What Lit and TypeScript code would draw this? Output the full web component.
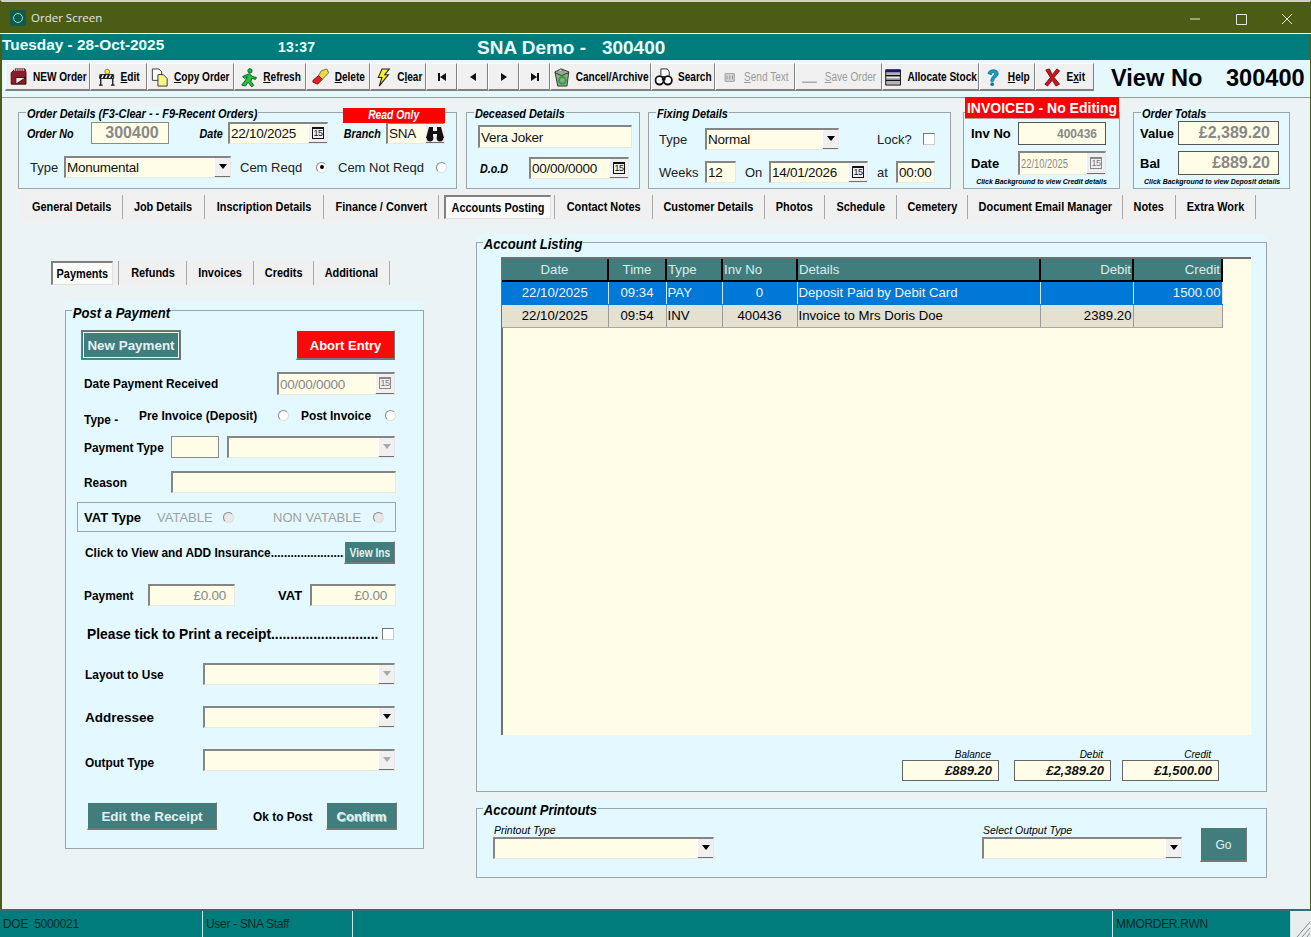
import { LitElement, html, css, svg } from 'lit';
import { customElement } from 'lit/decorators.js';

const ICONS: Record<string, unknown> = {
  note: svg`<path d="M2 5 L6 1 H17 L18 5 V17 H2 Z" fill="#8a1c2c" stroke="#3a0a10"/><path d="M3 2 H17" stroke="#f0f0f0" stroke-dasharray="1 1" stroke-width="2"/><path d="M7 17 V10 H18 Z" fill="#f4e9ea" stroke="#3a0a10"/>`,
  edit: svg`<circle cx="11" cy="4" r="2.6" fill="#f3ea3c" stroke="#777"/><path d="M3 7 H18 V11 H3 Z" fill="#fff" stroke="#111"/><path d="M5 7 L3 11 M9 7 L7 11 M13 7 L11 11 M17 7 L15 11" stroke="#111" stroke-width="2"/><path d="M4 11 V18 M17 11 V18 M2 18 H6 M15 18 H19" stroke="#111" stroke-width="1.4" fill="none"/>`,
  copy: svg`<path d="M2 1 H9 L12 4 V13 H2 Z" fill="#fff" stroke="#333"/><path d="M8 7 H14 L18 11 V19 H8 Z" fill="#fbf38a" stroke="#333"/>`,
  run: svg`<circle cx="11" cy="3" r="2.3" fill="#18b83c" stroke="#063"/><path d="M10 6 L14 9 L18 10 L17 12 L13 11 L12 14 L15 18 L13 20 L9 15 L6 19 L2 18 L6 13 L8 9 L5 11 L3 9 Z" fill="#22c440" stroke="#05451a" stroke-width=".9"/>`,
  eraser: svg`<path d="M11 3 L17 1 L19 5 L12 12 L8 8 Z" fill="#f4dc38" stroke="#666"/><path d="M8 8 L12 12 L7 17 L2 15 V13 Z" fill="#e0242c" stroke="#7a1015"/>`,
  bolt: svg`<path d="M9 1 H17 L12 7 H16 L6 19 L9 10 H5 Z" fill="#f6ee2e" stroke="#222" stroke-width="1.1"/>`,
  first: svg`<path d="M1 1 H3 V9 H1 Z M9 1 V9 L3 5 Z" fill="#111"/>`,
  prev: svg`<path d="M8 1 V9 L2 5 Z" fill="#111"/>`,
  next: svg`<path d="M2 1 V9 L8 5 Z" fill="#111"/>`,
  last: svg`<path d="M1 1 V9 L7 5 Z M7 1 H9 V9 H7 Z" fill="#111"/>`,
  bin: svg`<path d="M3 4 L10 1 L18 4 L16 19 H6 Z" fill="#96a890" stroke="#333"/><path d="M3 5 L10 8 L18 5" fill="none" stroke="#333"/><circle cx="11" cy="13" r="3.6" fill="none" stroke="#27a83a" stroke-width="2.2"/><path d="M6 3 L9 1 L12 3" fill="#ccc" stroke="#555"/>`,
  binoc: svg`<path d="M7 1 H14 L16 4 V9 H7 Z" fill="#fff" stroke="#222"/><circle cx="5.5" cy="13" r="4.4" fill="#fff" stroke="#111" stroke-width="2"/><circle cx="14.5" cy="13" r="4.4" fill="#fff" stroke="#111" stroke-width="2"/><path d="M8 10 H12 V13 H8 Z" fill="#111"/>`,
  text: svg`<path d="M5 6 H15 V14 H5 Z" fill="#d8d8d8" stroke="#999"/><path d="M7 8 V12 M10 8 V12 M13 8 V12" stroke="#888"/>`,
  save: svg`<path d="M1 15 H17" stroke="#aaa" stroke-width="1.4"/>`,
  stock: svg`<path d="M2 2 H18 V18 H2 Z" fill="#b4b4b4" stroke="#111"/><path d="M2 3 H18" stroke="#15157a" stroke-width="3"/><path d="M2 8 H18 M2 13 H18" stroke="#111" stroke-width="1.5"/><path d="M3 10 H17" stroke="#eee"/>`,
  help: svg`<path d="M4 6 C4 1 15 0 15 6 C15 10 10 10 10 14 H7 C7 9 11 8 11 6 C11 4 8 4 8 7 Z" fill="#12a0c4" stroke="#0a5a80" stroke-width=".7"/><circle cx="8.5" cy="17" r="2" fill="#0e7ea6"/>`,
  exit: svg`<path d="M3 2 L7 1 L10 7 L15 1 L18 3 L12 10 L18 17 L14 19 L10 13 L5 19 L2 17 L8 10 Z" fill="#d0141c" stroke="#4a0508" stroke-width=".8"/>`,
};

type Tool = { icon: string; label: unknown; off?: boolean };

const TOOLS: Tool[] = [
  { icon: 'note', label: 'NEW Order' },
  { icon: 'edit', label: html`<u>E</u>dit` },
  { icon: 'copy', label: html`<u>C</u>opy Order` },
  { icon: 'run', label: html`<u>R</u>efresh` },
  { icon: 'eraser', label: html`<u>D</u>elete` },
  { icon: 'bolt', label: html`C<u>l</u>ear` },
  { icon: 'first', label: '' },
  { icon: 'prev', label: '' },
  { icon: 'next', label: '' },
  { icon: 'last', label: '' },
  { icon: 'bin', label: 'Cancel/Archive' },
  { icon: 'binoc', label: 'Search' },
  { icon: 'text', label: html`<u>S</u>end Text`, off: true },
  { icon: 'save', label: html`<u>S</u>ave Order`, off: true },
  { icon: 'stock', label: 'Allocate Stock' },
  { icon: 'help', label: html`<u>H</u>elp` },
  { icon: 'exit', label: html`E<u>x</u>it` },
];

const TABS = ['General Details', 'Job Details', 'Inscription Details', 'Finance / Convert', 'Accounts Posting', 'Contact Notes', 'Customer Details', 'Photos', 'Schedule', 'Cemetery', 'Document Email Manager', 'Notes', 'Extra Work'];
const SUBTABS = ['Payments', 'Refunds', 'Invoices', 'Credits', 'Additional'];
const COLS = [
  ['Date', 'c'], ['Time', 'c'], ['Type', 'l'], ['Inv No', 'l'], ['Details', 'l'], ['Debit', 'r'], ['Credit', 'r'],
];
const ROWS = [
  { sel: true, cells: ['22/10/2025', '09:34', 'PAY', '0', 'Deposit Paid by Debit Card', '', '1500.00'] },
  { sel: false, cells: ['22/10/2025', '09:54', 'INV', '400436', 'Invoice to Mrs Doris Doe', '2389.20', ''] },
];
const ALIGN = ['c', 'c', 'l', 'c', 'l', 'r', 'r'];

@customElement('app-root')
export class AppRoot extends LitElement {
  static styles = css`
    :host { display: block; width: 1311px; height: 937px; overflow: hidden; font-family: "Liberation Sans", Arial, sans-serif; color: #000; }
    * { box-sizing: border-box; }
    .window { width: 1311px; height: 937px; display: flex; flex-direction: column; background: #ecf3f5; border-top: 2px solid #cfcfcf; border-left: 2px solid #4b5d14; border-right: 1px solid #4b5d14; }

    .title { height: 32px; margin-left: -2px; margin-right: -1px; background: #4b5d14; color: #e6e6e6; display: flex; align-items: center; padding-left: 10px; font: 11.5px "Open Sans", "Liberation Sans", sans-serif; border-bottom: 1px solid #fff; flex: none; }
    .logo { width: 16px; height: 16px; background: #0f5a4c; border-radius: 2px; display: flex; align-items: center; justify-content: center; margin-right: 5px; }
    .logo i { width: 10px; height: 10px; border: 1.5px solid #8fe0e0; border-radius: 50%; }
    .winbtns { margin-left: auto; display: grid; grid-template-columns: 46px 46px 46px; width: 138px; margin-right: 1px; }
    .winbtns svg { width: 46px; height: 30px; display: block; }

    .date-bar { height: 26px; background: #007c7c; color: #e8ffff; font-weight: bold; display: grid; grid-template-columns: 276px 199px 1fr; align-items: center; flex: none; }
    .date-bar .d { font-size: 15.4px; padding-bottom: 4px; }
    .date-bar .t { font-size: 14px; letter-spacing: .3px; }
    .date-bar .s { font-size: 19px; white-space: pre; padding-top: 2px; }

    .toolbar { height: 38px; background: #e5f8fc; border-bottom: 1px solid #9a9a9a; padding: 3px 0 0 3px; display: grid; grid-template-columns: 85px 57px 87px 72px 64px 56px 31px 31px 31px 31px 101px 64px 80px 87px 97px 56px 59px 17px 115px 1fr; flex: none; }
    .tool { height: 28px; background: #f0f0f0; border-top: 1px solid #fff; border-left: 1px solid #fff; border-right: 1px solid #808080; border-bottom: 2px solid #808080; display: flex; align-items: center; justify-content: center; font: bold 12px "Liberation Sans", sans-serif; white-space: nowrap; }
    .tool-in { display: flex; align-items: center; gap: 6px; transform: scaleX(.84); flex: none; padding-top: 1px; }
    .tool-in svg { width: 22px; height: 19px; flex: none; }
    .tool.nav .tool-in { transform: none; }
    .tool.nav .tool-in svg { width: 10px; height: 10px; }
    .tool.off { color: #9c9c9c; font-weight: normal; }
    .view { font-size: 23.6px; font-weight: bold; line-height: 30px; white-space: nowrap; height: 30px; }
    .view-a { grid-column: 19; }

    .top { height: 92px; padding: 14px 0 0 16px; display: grid; grid-template-columns: 439px 183px 311px 169px 170px; flex: none; }
    .group { position: relative; border: 1px solid #9aa5a8; background: #e3f9ff; }
    .legend { position: absolute; top: -6px; left: 7px; padding: 0 1px; background: #e3f9ff; font: italic bold 12px/14px "Liberation Sans", sans-serif; white-space: nowrap; transform: scaleX(.91); transform-origin: left; }
    .legend.big { font-size: 15px; line-height: 16px; top: -7px; left: 6px; transform: scaleX(.87); }
    .g-order { height: 77px; }
    .g-dec { height: 77px; margin-left: 9px; }
    .g-fix { height: 77px; margin-left: 8px; }
    .g-inv { height: 77px; margin-left: 12px; }
    .g-tot { height: 77px; margin-left: 13px; }

    .row { display: grid; align-items: center; white-space: nowrap; }
    .lbl { font-size: 13px; color: #222; }
    .il { font: italic bold 12.5px "Liberation Sans", sans-serif; transform: scaleX(.86); transform-origin: left; padding-top: 2px; }
    .il.right6 { transform-origin: right; }
    .bl { font-weight: bold; font-size: 13px; }
    .sl { font-weight: bold; font-size: 11.9px; padding-top: 1px; }
    .pad9 { padding-left: 9px; }
    .right6 { text-align: right; padding-right: 6px; }

    .inp { height: 100%; background: #fffde8; border-top: 2px solid #858585; border-left: 2px solid #858585; border-right: 1px solid #e8e8e8; border-bottom: 1px solid #e8e8e8; font-size: 13.5px; letter-spacing: -.25px; display: flex; align-items: center; padding-left: 1px; overflow: hidden; white-space: nowrap; color: #111; }
    .inp.flat { border: 1px solid #8a8a8a; }
    .inp.grey { color: #888; }
    .inp.end { justify-content: flex-end; padding-right: 8px; }
    .inp.mid { justify-content: center; padding-left: 4px; }
    .inp.big { font-size: 16px; font-weight: bold; letter-spacing: 0; }
    .inp.small { font-size: 12px; font-weight: bold; letter-spacing: 0; }
    .inp.dark { border-color: #555; border-width: 1px; }
    .sq { margin-left: auto; margin-right: -1px; height: calc(100% + 1px); width: 20px; flex: none; background: #f0f0f0; border-left: 1px solid #fff; border-bottom: 2px solid #707070; border-right: 1px solid #707070; display: flex; align-items: center; justify-content: center; }
    .combo .sq { width: 17px; }
    .cal { width: 12px; height: 12px; border: 1px solid #111; border-top-width: 2px; font: 9px/9px "Liberation Sans", sans-serif; letter-spacing: -.5px; text-align: center; color: #111; overflow: hidden; }
    .off .cal { border-color: #888; color: #777; }
    .arrow { width: 0; height: 0; border: 4px solid transparent; border-top: 5px solid #000; border-bottom: 0; }
    .off .arrow { border-top-color: #aaa; }
    .narrow-date span { font-size: 12px; letter-spacing: 0; display: inline-block; width: 60px; flex: none; transform: scaleX(.78); transform-origin: left; }
    .bino { width: 20px; height: 18px; flex: none; }

    .radio { width: 11px; height: 11px; border-radius: 50%; background: #fff; border: 1px solid #8a8a8a; border-right-color: #ddd; border-bottom-color: #ddd; display: flex; align-items: center; justify-content: center; }
    .radio i { width: 4px; height: 4px; background: #000; border-radius: 50%; }
    .radio.off { background: #e8e8e8; }
    .check { width: 12px; height: 12px; background: #fff; border: 1px solid #777; border-right-color: #ccc; border-bottom-color: #ccc; }

    .o1 { grid-template-columns: 64px 78px 59px 100px 58px 59px; margin: 9px 0 0 8px; height: 22px; }
    .o2 { grid-template-columns: 34px 167px 85px 22px 98px 12px; margin: 12px 0 0 11px; height: 22px; }
    .read-only { position: absolute; top: -5px; left: 324px; width: 102px; height: 15px; background: #f00; color: #fff; font: italic bold 12px/15px "Liberation Sans", sans-serif; text-align: center; }
    .read-only span { display: inline-block; transform: scaleX(.86); }
    .d1 { grid-template-columns: 154px; margin: 12px 0 0 11px; height: 23px; }
    .d2 { grid-template-columns: 49px 100px; margin: 9px 0 0 13px; height: 22px; }
    .f1 { grid-template-columns: 46px 134px 84px 12px; margin: 15px 0 0 10px; height: 22px; }
    .f1 .lock { padding-left: 38px; }
    .f2 { grid-template-columns: 46px 31px 33px 99px 28px 39px; margin: 11px 0 0 10px; height: 22px; }
    .invoiced { position: absolute; top: -16px; left: 1px; width: 154px; height: 22px; background: #f00; color: #fff; font: bold 14px/22px "Liberation Sans", sans-serif; text-align: center; white-space: nowrap; border-bottom: 1px solid #b8a0a0; }
    .i1 { grid-template-columns: 47px 88px; margin: 9px 0 0 7px; height: 23px; }
    .i2 { grid-template-columns: 47px 88px; margin: 6px 0 0 7px; height: 24px; }
    .t1 { grid-template-columns: 38px 101px; margin: 8px 0 0 6px; height: 24px; }
    .t2 { grid-template-columns: 38px 101px; margin: 6px 0 0 6px; height: 24px; }
    .hint { font: italic bold 8px/10px "Liberation Sans", sans-serif; text-align: center; margin-top: 2px; white-space: nowrap; transform: scaleX(.87); }

    .tabs { height: 32px; margin-left: 20px; padding-top: 5px; display: grid; grid-template-columns: 101px 82px 119px 115px 116px 98px 112px 60px 72px 71px 155px 53px 80px; width: 1234px; background: #f0f0f0; flex: none; }
    .tab { height: 24px; border-right: 1px solid #a8a8a8; display: flex; align-items: center; justify-content: center; font: bold 12px "Liberation Sans", sans-serif; white-space: nowrap; }
    .tab span, .subtab span { display: block; flex: none; transform: scaleX(.91); }
    .tab.on { background: #fbfbfb; margin: 0 3px 0 5px; border-top: 2px solid #808080; border-left: 2px solid #808080; border-right: 1px solid #e0e0e0; border-bottom: 1px solid #e0e0e0; padding-top: 1px; }
    .tab-wrap { border-right: 1px solid #a8a8a8; height: 24px; }

    .main { flex: 1; display: grid; grid-template-columns: 474px 791px; min-height: 0; }
    .left { padding-top: 39px; }
    .subtabs { margin-left: 49px; display: grid; grid-template-columns: 68px 68px 67px 60px 76px; width: 339px; height: 24px; background: #f0f0f0; }
    .subtab { border-right: 1px solid #a8a8a8; display: flex; align-items: center; justify-content: center; font: bold 12px "Liberation Sans", sans-serif; }
    .subtab.on { height: 100%; background: #fbfbfb; margin-right: 5px; border: 1px solid #808080; border-top-width: 2px; border-left-width: 2px; border-right-color: #e0e0e0; border-bottom-color: #e0e0e0; }
    .subtab-wrap { border-right: 1px solid #a8a8a8; }

    .g-pay { margin: 25px 0 0 63px; width: 359px; height: 539px; box-shadow: 0 -9px 0 #e3f9ff; padding-left: 18px; }
    .g-pay .legend.big { top: -6px; }
    .p0 { grid-template-columns: 100px 115px 99px; margin: 19px 0 0 -3px; height: 30px; }
    .p1 { grid-template-columns: 193px 118px; margin-top: 12px; height: 23px; }
    .p2 { grid-template-columns: 55px 139px 23px 84px 11px; margin-top: 11px; height: 21px; }
    .p2 .dash { padding-top: 7px; }
    .p2 .lift { padding-bottom: 3px; }
    .p2 .radio { margin-bottom: 3px; }
    .p3 { grid-template-columns: 87px 48px 176px; margin-top: 9px; height: 22px; }
    .p3 .combo { margin-left: 8px; }
    .p4 { grid-template-columns: 87px 225px; margin-top: 13px; height: 22px; }
    .vat { grid-template-columns: 73px 66px 50px 100px 11px; margin: 9px 0 0 -7px; width: 319px; height: 30px; border: 1px solid #9aa5a8; padding-left: 6px; }
    .vat .g { color: #a0a0a0; font-size: 13px; }
    .p5 { grid-template-columns: 259px 51px; margin: 9px 0 0 1px; width: 310px; height: 23px; }
    .p6 { grid-template-columns: 64px 87px 75px 86px; margin-top: 20px; height: 22px; }
    .p6 .v { padding-left: 43px; }
    .p7 { grid-template-columns: 295px 12px; margin: 19px 0 0 3px; height: 18px; font-size: 13.8px; font-weight: bold; }
    .p7 div:first-child { padding-top: 1px; }
    .p8 { grid-template-columns: 118px 192px; margin: 20px 0 0 1px; height: 22px; }
    .p9 { grid-template-columns: 118px 192px; margin: 21px 0 0 1px; height: 22px; }
    .p10 { grid-template-columns: 130px 109px 71px; margin: 31px 0 0 3px; height: 28px; }
    .p10 .ok { padding-left: 36px; }
    .big-sl { font-size: 13.5px; }
    .low { padding-top: 5px; }

    .btn { height: 100%; background: #417d7d; color: #e2f2f2; border-top: 1px solid #e8f8f8; border-left: 1px solid #e8f8f8; border-right: 1px solid #777; border-bottom: 2px solid #777; display: flex; align-items: center; justify-content: center; font-weight: bold; font-size: 13.4px; white-space: nowrap; padding-top: 1px; }
    .btn.red { background: #f70a0a; color: #fff; font-size: 13px; }
    .btn.focus { outline: 1px solid #777; outline-offset: -1px; border: 3px double #e8f8f8; }
    .btn.sm { font-size: 12px; }
    .btn.sm span { display: block; flex: none; transform: scaleX(.85); }
    .btn.ghost { font-size: 13px; text-shadow: 1px 1px 0 #9ccccc; }
    .btn.plain { font-weight: normal; font-size: 12px; }

    .right { padding-top: 20px; }
    .g-list { width: 791px; height: 550px; box-shadow: 0 -8px 0 #e3f9ff; }
    .gridbox { margin: 14px 0 0 24px; width: 750px; height: 478px; background: #fffde8; border-top: 2px solid #707070; border-left: 2px solid #707070; }
    table { border-collapse: collapse; table-layout: fixed; width: 720px; margin-left: -1px; font: 13.2px "Liberation Sans", sans-serif; }
    th { height: 22px; background: #417d7d; color: #dcecec; font-weight: normal; border: 1px solid #000; border-width: 0 2px 2px 0; padding: 0 1px; overflow: hidden; white-space: nowrap; }
    td { height: 23px; padding: 0 1px; border-right: 1px solid #9a9a9a; border-bottom: 1px solid #a8a8a8; white-space: nowrap; background: #e4e1d0; }
    tr.sel td { background: #0078d7; color: #eef6ff; border-right-color: #cfe6fa; border-bottom-color: #0078d7; }
    .c { text-align: center; }
    .l { text-align: left; }
    .r { text-align: right; }

    .sums { margin: 14px 0 0 425px; display: grid; grid-template-columns: 97px 15px 97px 11px 97px; height: 32px; }
    .sum { display: flex; flex-direction: column; }
    .sum span { font: italic 10px/11px "Liberation Sans", sans-serif; text-align: right; padding-right: 8px; }
    .sum .inp { height: 21px; font: italic bold 13px "Liberation Sans", sans-serif; letter-spacing: 0; justify-content: flex-end; padding-right: 6px; border: 1px solid #666; background: #fffde8; }

    .g-print { width: 791px; height: 70px; margin-top: 16px; box-shadow: 0 -8px 0 #e3f9ff; padding: 15px 0 0 16px; display: grid; grid-template-columns: 221px 268px 200px 18px 47px; align-items: start; }
    .pc { display: flex; flex-direction: column; }
    .pc span { font: italic 10.5px/13px "Liberation Sans", sans-serif; padding-left: 1px; }
    .pc .combo { height: 22px; flex: none; }
    .go { grid-column: 5; height: 35px; margin-top: 3px; }

    .status { height: 28px; flex: none; margin-left: -2px; margin-right: -1px; background: #007c7c; border-top: 2px solid #2f6f6f; display: grid; grid-template-columns: 203px 150px 760px 178px 20px; font: 12px "Liberation Sans", sans-serif; color: #0c2a2a; letter-spacing: -.3px; }
    .cell { padding: 6px 0 0 3px; border-right: 1px solid #c9e6e6; white-space: pre; }
    .grip { background: #e8eeee; }
    .grip svg { width: 20px; height: 26px; display: block; }
  `;

  private icon(name: string) {
    const box = ['first', 'prev', 'next', 'last'].includes(name) ? '0 0 10 10' : '0 0 20 20';
    return html`<svg viewBox=${box} preserveAspectRatio="none">${ICONS[name]}</svg>`;
  }

  private dateField(value: string, off = false) {
    return html`<div class="inp ${off ? 'grey off' : ''}">${value}<div class="sq"><div class="cal">15</div></div></div>`;
  }

  private combo(value = '', off = false) {
    return html`<div class="inp combo ${off ? 'off' : ''}">${value}<div class="sq"><div class="arrow"></div></div></div>`;
  }

  private radio(on = false, off = false) {
    return html`<div class="radio ${off ? 'off' : ''}">${on ? html`<i></i>` : ''}</div>`;
  }

  private renderTitle() {
    return html`<div class="title">
      <div class="logo"><i></i></div>Order Screen
      <div class="winbtns">
        <svg viewBox="0 0 46 30"><path d="M18 16 H28" stroke="#e6e6e6"/></svg>
        <svg viewBox="0 0 46 30"><path d="M18.5 11.5 H28.5 V21.5 H18.5 Z" stroke="#e6e6e6" fill="none"/></svg>
        <svg viewBox="0 0 46 30"><path d="M18 11 L28 21 M28 11 L18 21" stroke="#e6e6e6" fill="none"/></svg>
      </div>
    </div>`;
  }

  private renderToolbar() {
    return html`<div class="toolbar">
      ${TOOLS.map(t => html`<div class="tool ${t.off ? 'off' : ''} ${t.label === '' ? 'nav' : ''}"><div class="tool-in">${this.icon(t.icon)}${t.label ? html`<span>${t.label}</span>` : ''}</div></div>`)}
      <div class="view view-a">View No</div>
      <div class="view">300400</div>
    </div>`;
  }

  private renderTop() {
    return html`<div class="top">
      <div class="group g-order">
        <div class="legend">Order Details (F3-Clear - - F9-Recent Orders)</div>
        <div class="read-only"><span>Read Only</span></div>
        <div class="row o1">
          <div class="il">Order No</div>
          <div class="inp grey big mid flat">300400</div>
          <div class="il right6">Date</div>
          ${this.dateField('22/10/2025')}
          <div class="il right6">Branch</div>
          <div class="inp">SNA<div class="sq"><svg class="bino" viewBox="0 0 20 18"><path d="M4 3 H8 V7 H12 V3 H16 L19 14 H12 V10 H8 V14 H1 Z" fill="#111"/><circle cx="5" cy="14" r="3.4" fill="#111"/><circle cx="15" cy="14" r="3.4" fill="#111"/></svg></div></div>
        </div>
        <div class="row o2">
          <div class="lbl">Type</div>
          ${this.combo('Monumental')}
          <div class="lbl pad9">Cem Reqd</div>
          ${this.radio(true)}
          <div class="lbl">Cem Not Reqd</div>
          ${this.radio()}
        </div>
      </div>
      <div class="group g-dec">
        <div class="legend">Deceased Details</div>
        <div class="row d1"><div class="inp">Vera Joker</div></div>
        <div class="row d2"><div class="il">D.o.D</div>${this.dateField('00/00/0000')}</div>
      </div>
      <div class="group g-fix">
        <div class="legend">Fixing Details</div>
        <div class="row f1">
          <div class="lbl">Type</div>
          ${this.combo('Normal')}
          <div class="lbl lock">Lock?</div>
          <div class="check"></div>
        </div>
        <div class="row f2">
          <div class="lbl">Weeks</div>
          <div class="inp">12</div>
          <div class="lbl pad9">On</div>
          ${this.dateField('14/01/2026')}
          <div class="lbl pad9">at</div>
          <div class="inp">00:00</div>
        </div>
      </div>
      <div class="group g-inv">
        <div class="invoiced">INVOICED - No Editing</div>
        <div class="row i1"><div class="bl">Inv No</div><div class="inp grey end dark small">400436</div></div>
        <div class="row i2"><div class="bl">Date</div><div class="inp grey off narrow-date"><span>22/10/2025</span><div class="sq"><div class="cal">15</div></div></div></div>
        <div class="hint">Click Background to view Credit details</div>
      </div>
      <div class="group g-tot">
        <div class="legend">Order Totals</div>
        <div class="row t1"><div class="bl">Value</div><div class="inp grey end big dark">£2,389.20</div></div>
        <div class="row t2"><div class="bl">Bal</div><div class="inp grey end big dark">£889.20</div></div>
        <div class="hint">Click Background to view Deposit details</div>
      </div>
    </div>`;
  }

  private renderTabs() {
    return html`<div class="tabs">
      ${TABS.map(t => t === 'Accounts Posting'
        ? html`<div class="tab-wrap"><div class="tab on"><span>${t}</span></div></div>`
        : html`<div class="tab"><span>${t}</span></div>`)}
    </div>`;
  }

  private renderPayment() {
    return html`<div class="group g-pay">
      <div class="legend big">Post a Payment</div>
      <div class="row p0">
        <div class="btn focus">New Payment</div>
        <div></div>
        <div class="btn red">Abort Entry</div>
      </div>
      <div class="row p1"><div class="sl">Date Payment Received</div>${this.dateField('00/00/0000', true)}</div>
      <div class="row p2">
        <div class="sl dash">Type -</div>
        <div class="sl lift">Pre Invoice (Deposit)</div>
        ${this.radio()}
        <div class="sl lift">Post Invoice</div>
        ${this.radio()}
      </div>
      <div class="row p3">
        <div class="sl">Payment Type</div>
        <div class="inp flat"></div>
        ${this.combo('', true)}
      </div>
      <div class="row p4"><div class="sl">Reason</div><div class="inp"></div></div>
      <div class="row vat">
        <div class="bl">VAT Type</div>
        <div class="g">VATABLE</div>
        ${this.radio(false, true)}
        <div class="g">NON VATABLE</div>
        ${this.radio(false, true)}
      </div>
      <div class="row p5">
        <div class="sl">Click to View and ADD Insurance.......................</div>
        <div class="btn sm"><span>View Ins</span></div>
      </div>
      <div class="row p6">
        <div class="sl">Payment</div>
        <div class="inp grey end">£0.00</div>
        <div class="bl v">VAT</div>
        <div class="inp grey end">£0.00</div>
      </div>
      <div class="row p7"><div>Please tick to Print a receipt............................</div><div class="check"></div></div>
      <div class="row p8"><div class="sl">Layout to Use</div>${this.combo('', true)}</div>
      <div class="row p9"><div class="sl big-sl">Addressee</div>${this.combo()}</div>
      <div class="row p9"><div class="sl low">Output Type</div>${this.combo('', true)}</div>
      <div class="row p10">
        <div class="btn">Edit the Receipt</div>
        <div class="sl ok">Ok to Post</div>
        <div class="btn ghost">Confirm</div>
      </div>
    </div>`;
  }

  private renderListing() {
    return html`<div class="group g-list">
      <div class="legend big">Account Listing</div>
      <div class="gridbox">
        <table>
          <colgroup><col style="width:106px"><col style="width:58px"><col style="width:56px"><col style="width:75px"><col style="width:243px"><col style="width:93px"><col style="width:89px"></colgroup>
          <thead><tr>${COLS.map(([name, al]) => html`<th class=${al}>${name}</th>`)}</tr></thead>
          <tbody>${ROWS.map(r => html`<tr class=${r.sel ? 'sel' : ''}>${r.cells.map((c, i) => html`<td class=${ALIGN[i]}>${c}</td>`)}</tr>`)}</tbody>
        </table>
      </div>
      <div class="sums">
        <div class="sum"><span>Balance</span><div class="inp">£889.20</div></div>
        <div></div>
        <div class="sum"><span>Debit</span><div class="inp">£2,389.20</div></div>
        <div></div>
        <div class="sum"><span>Credit</span><div class="inp">£1,500.00</div></div>
      </div>
    </div>`;
  }

  private renderPrintouts() {
    return html`<div class="group g-print">
      <div class="legend big">Account Printouts</div>
      <div class="pc"><span>Printout Type</span>${this.combo()}</div>
      <div></div>
      <div class="pc"><span>Select Output Type</span>${this.combo()}</div>
      <div class="btn plain go">Go</div>
    </div>`;
  }

  render() {
    return html`<div class="window">
      ${this.renderTitle()}
      <div class="date-bar">
        <div class="d">Tuesday - 28-Oct-2025</div>
        <div class="t">13:37</div>
        <div class="s">SNA Demo -   300400</div>
      </div>
      ${this.renderToolbar()}
      ${this.renderTop()}
      ${this.renderTabs()}
      <div class="main">
        <div class="left">
          <div class="subtabs">
            ${SUBTABS.map((t, i) => i === 0
              ? html`<div class="subtab-wrap"><div class="subtab on"><span>${t}</span></div></div>`
              : html`<div class="subtab"><span>${t}</span></div>`)}
          </div>
          ${this.renderPayment()}
        </div>
        <div class="right">
          ${this.renderListing()}
          ${this.renderPrintouts()}
        </div>
      </div>
      <div class="status">
        <div class="cell">DOE  5000021</div>
        <div class="cell">User - SNA Staff</div>
        <div class="cell"></div>
        <div class="cell">MMORDER.RWN</div>
        <div class="grip"><svg viewBox="0 0 20 26"><path d="M6 26 L19 11 M11 26 L19 17 M16 26 L19 22" stroke="#888" fill="none"/></svg></div>
      </div>
    </div>`;
  }
}
